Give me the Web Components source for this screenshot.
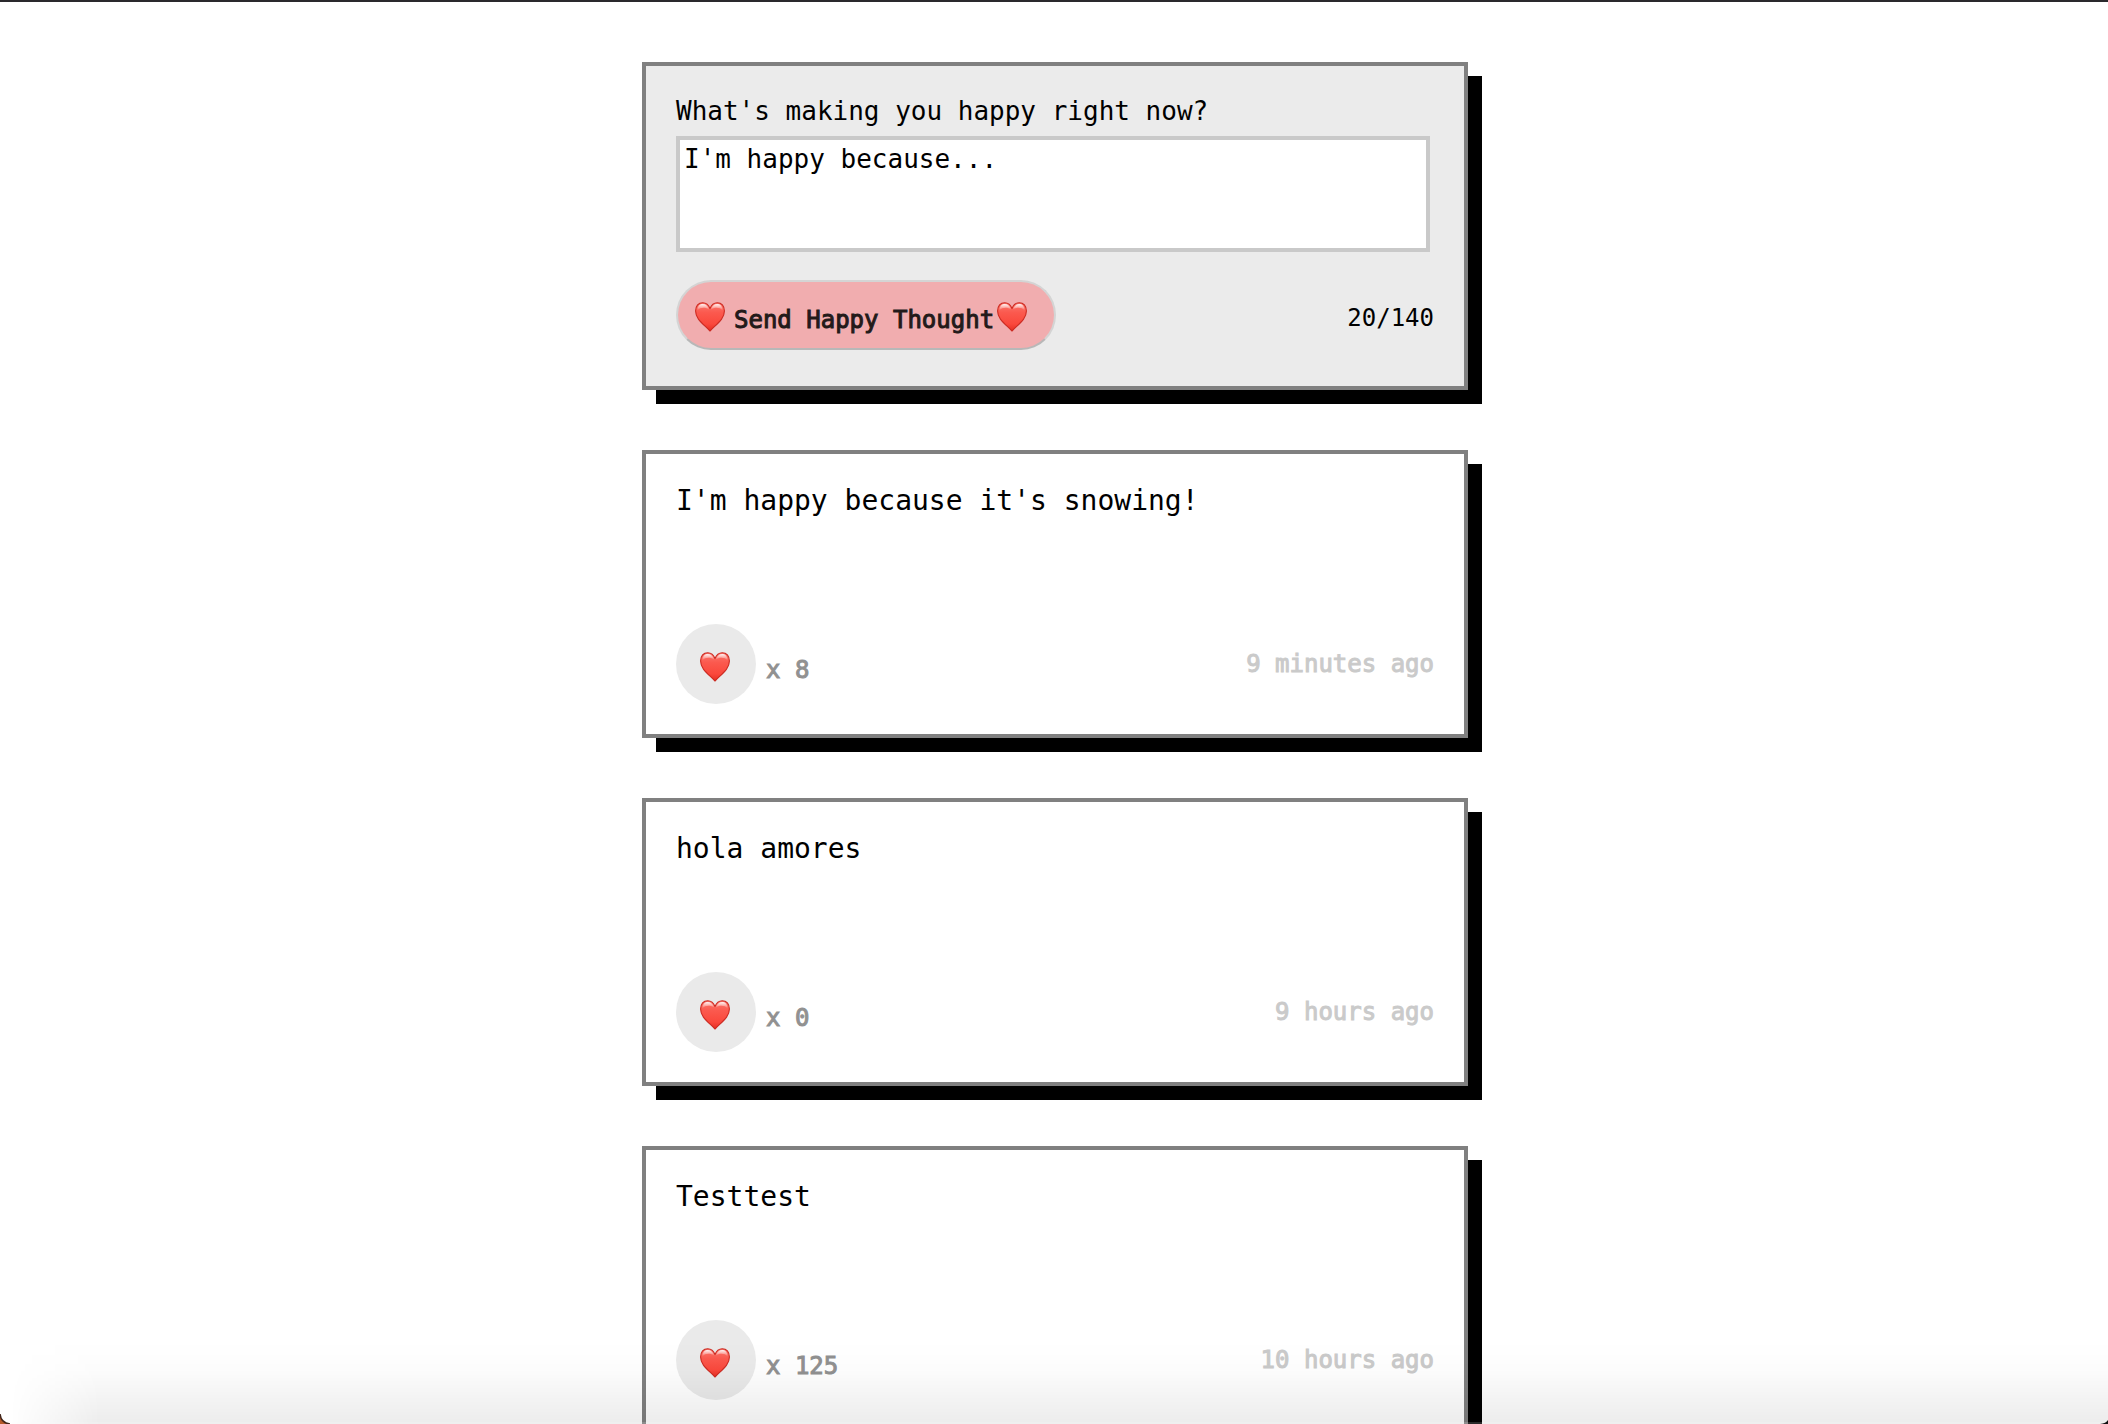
<!DOCTYPE html>
<html lang="en">
<head>
<meta charset="utf-8">
<title>Happy Thoughts</title>
<style>
html, body { height: 100%; margin: 0; }
body { background: #fff; color: #000; font-family: "DejaVu Sans Mono", monospace; font-size: 24px; line-height: 28px; overflow: hidden; }
</style>
</head>
<body>
<happy-window>
  <thought-form></thought-form>
  <thought-item likes="8" time="9 minutes ago">I'm happy because it's snowing!</thought-item>
  <thought-item likes="0" time="9 hours ago">hola amores</thought-item>
  <thought-item likes="125" time="10 hours ago">Testtest</thought-item>
</happy-window>

<template id="window-template">
  <style>
    :host { display: block; box-sizing: border-box; height: 100%; overflow: hidden; border-top: 2px solid #2a292d; }
    main { display: flex; flex-direction: column; align-items: center; gap: 60px; padding: 60px 0 60px 2px; }
    .shade { position: fixed; inset: auto 0 0 0; height: 84px; pointer-events: none;
      background: linear-gradient(rgba(0,0,0,0), rgba(0,0,0,.012) 35%, rgba(0,0,0,.075));
      -webkit-mask-image: linear-gradient(90deg, transparent 10px, #000 100px); mask-image: linear-gradient(90deg, transparent 10px, #000 100px); }
    .edge { position: fixed; inset: auto 0 0 0; height: 2px; pointer-events: none; background: rgba(255,255,255,.16); }
    .corner { position: fixed; bottom: 0; width: 10px; height: 10px; }
    .left { left: 0; }
    .right { right: 0; }
  </style>
  <main><slot></slot></main>
  <div class="shade"></div>
  <div class="edge"></div>
  <svg class="corner left" viewBox="0 0 10 10" aria-hidden="true"><path d="M0 0Q1 9 10 10H0Z" fill="#b55a2b"/><path d="M0 0Q1 9 10 10" fill="none" stroke="#40261c" stroke-width="1.5"/></svg>
  <svg class="corner right" viewBox="0 0 10 10" aria-hidden="true"><path d="M10 6Q8 9.500 2 10H10Z" fill="#111"/></svg>
</template>

<template id="heart-template">
  <style>
    :host { display: block; flex: none; width: 30px; height: 30px; }
    svg { display: block; width: 100%; height: 100%; }
  </style>
  <svg viewBox="0 0 30 30" aria-hidden="true">
    <defs>
      <linearGradient id="body" x1="0" y1="0" x2="0" y2="1"><stop offset="0" stop-color="#fb7a70"/><stop offset=".35" stop-color="#fb594e"/><stop offset=".75" stop-color="#fa483c"/><stop offset="1" stop-color="#e52e23"/></linearGradient>
      <linearGradient id="shine" x1="0" y1="0" x2="0" y2="1"><stop offset="0" stop-color="#fff" stop-opacity=".9"/><stop offset="1" stop-color="#fff" stop-opacity="0"/></linearGradient>
    </defs>
    <path d="M15 6.500C13.500 2.500 10.700.7 7.700.7 3.500.7.600 4 .600 9c0 7.600 6.500 12 14.400 20C22.900 21 29.400 16.600 29.400 9c0-5-2.900-8.300-7.100-8.300C19.300.7 16.500 2.500 15 6.500Z" fill="url(#body)" stroke="#cc2b22" stroke-width="1.100" stroke-linejoin="round"/>
    <path d="M2.400 8.500C2.400 4 5 2.100 7.900 2.100c3 0 5 2 6.200 5.400C11 5.400 5.500 4.800 2.400 8.500Z" fill="url(#shine)"/>
    <path d="M27.600 8.500c0-4.500-2.600-6.400-5.500-6.400-3 0-5 2-6.200 5.400 3.100-2.100 8.600-2.700 11.700 1Z" fill="url(#shine)"/>
  </svg>
</template>

<template id="card-template">
  <style>
    :host { display: flex; flex-direction: column; box-sizing: border-box; width: 100%; padding: 30px; border: 4px solid #808080; background: var(--card-fill, #fff); box-shadow: 14px 14px 0 #000; }
  </style>
  <slot></slot>
</template>

<template id="form-template">
  <style>
    :host { display: block; width: 100%; max-width: 826px; }
    happy-card { --card-fill: #ebebeb; }
    form { display: flex; flex-direction: column; margin: 0; }
    label { font-size: 26px; line-height: 30px; padding-bottom: 10px; }
    textarea { display: block; box-sizing: border-box; height: 116px; margin: 0 4px 0 0; padding: 3px 4px; border: 4px solid #c9c9c9; border-radius: 0; outline: 0; resize: none; background: #fff; color: #000; font: 26px/32px "DejaVu Sans Mono", monospace; }
    .row { display: flex; align-items: center; justify-content: space-between; padding: 28px 0 6px; }
    button { display: flex; align-items: center; box-sizing: border-box; height: 70px; margin: 0; padding: 3px 27px 0 17px; border: 2px solid #d4d4d4; border-bottom-color: #b8b8b8; border-radius: 35px; background: #f1adaf; color: #231a1a; font: 24px/28px "DejaVu Sans Mono", monospace; -webkit-text-stroke: 1px currentColor; }
    button span { padding: 7px 3px 0 9px; }
    output { padding-top: 6px; }
  </style>
  <happy-card>
    <form>
      <label for="thought">What's making you happy right now?</label>
      <textarea id="thought" spellcheck="false">I'm happy because...</textarea>
      <div class="row">
        <button type="button"><happy-heart></happy-heart><span>Send Happy Thought</span><happy-heart></happy-heart></button>
        <output for="thought">20/140</output>
      </div>
    </form>
  </happy-card>
</template>

<template id="item-template">
  <style>
    :host { display: block; width: 100%; max-width: 826px; }
    p { margin: 0; min-height: 140px; font-size: 28px; line-height: 34px; overflow-wrap: anywhere; }
    .row { display: flex; align-items: center; justify-content: space-between; }
    .likes { display: flex; align-items: center; gap: 10px; color: #919191; }
    button { display: flex; align-items: center; justify-content: center; width: 80px; height: 80px; margin: 0; padding: 5px 2px 0 0; border: 0; border-radius: 50%; background: #eaeaea; }
    .count { padding-top: 12px; }
    .count, time { -webkit-text-stroke: 1px currentColor; }
    time { color: #cacaca; }
  </style>
  <happy-card>
    <p><slot></slot></p>
    <div class="row">
      <div class="likes"><button type="button" aria-label="Like"><happy-heart></happy-heart></button><span class="count"></span></div>
      <time></time>
    </div>
  </happy-card>
</template>

<script>
class TemplateElement extends HTMLElement {
  constructor() {
    super();
    const template = document.getElementById(this.constructor.template);
    this.attachShadow({ mode: 'open' }).append(template.content.cloneNode(true));
  }
}
class HappyHeart extends TemplateElement { static template = 'heart-template'; }
class HappyCard extends TemplateElement { static template = 'card-template'; }
class HappyWindow extends TemplateElement { static template = 'window-template'; }
class ThoughtForm extends TemplateElement {
  static template = 'form-template';
  connectedCallback() {
    const box = this.shadowRoot.querySelector('textarea');
    const output = this.shadowRoot.querySelector('output');
    box.addEventListener('input', () => { output.textContent = box.value.length + '/140'; });
  }
}
class ThoughtItem extends TemplateElement {
  static template = 'item-template';
  connectedCallback() {
    const count = this.shadowRoot.querySelector('.count');
    let likes = Number(this.getAttribute('likes'));
    const show = () => { count.textContent = 'x ' + likes; };
    show();
    this.shadowRoot.querySelector('time').textContent = this.getAttribute('time');
    this.shadowRoot.querySelector('button').onclick = () => { likes += 1; show(); };
  }
}
customElements.define('happy-heart', HappyHeart);
customElements.define('happy-card', HappyCard);
customElements.define('thought-form', ThoughtForm);
customElements.define('thought-item', ThoughtItem);
customElements.define('happy-window', HappyWindow);
</script>
</body>
</html>
